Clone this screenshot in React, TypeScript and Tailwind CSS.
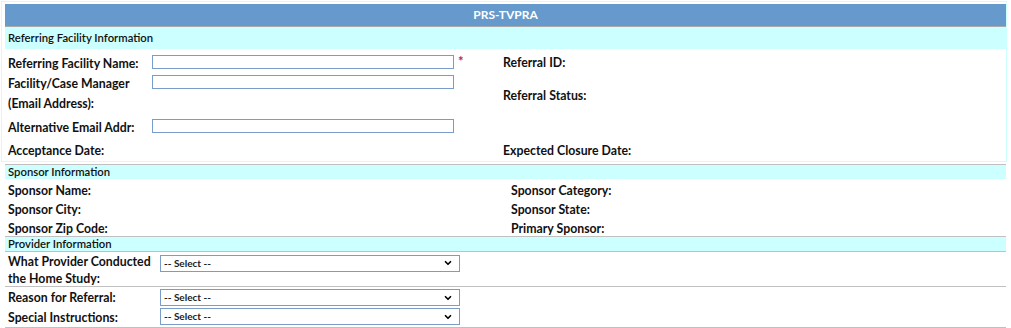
import { ChevronDown } from 'lucide-react';

const font = "font-['Lato','Liberation_Sans',sans-serif]";

function TextInput() {
  return <input type="text" className="block w-[302px] h-[14px] border border-[#7a9cc8] bg-white outline-none" />;
}

function Select() {
  return (
    <div className="relative w-[300px] h-[17px]">
      <select className="appearance-none w-full h-full border border-[#7a9cc8] bg-white pl-[3px] text-[10px] leading-[15px] text-[#222] outline-none">
        <option>-- Select --</option>
      </select>
      <ChevronDown className="absolute right-[7px] top-[4px] w-[10px] h-[10px] text-black pointer-events-none" strokeWidth={4} />
    </div>
  );
}

const label = 'font-bold text-[12.3px] leading-[15px] text-[#111]';
const heading = 'bg-[#ccffff] flex items-center pl-[3px] text-[11.3px] font-semibold text-[#111]';

export default function App() {
  return (
    <div className={`${font} w-[1011px] h-[328px] bg-white overflow-hidden`}>
      {/* Referring facility box */}
      <div className="ml-px mt-px w-[1006px] border border-[#ccffff] pt-[2px] pl-[3px]">
        <div className="h-[23px] bg-[#6699cc] border-b border-[#aaaaaa] flex items-center justify-center text-white font-bold text-[12px]">
          PRS-TVPRA
        </div>
        <div className={`h-[22px] ${heading}`}>Referring Facility Information</div>
        <div className={`grid grid-cols-[147px_351px_1fr] grid-rows-[25px_16px_23px_26px_22px] ${label}`}>
          <div className="flex items-center pl-[3px] pt-[3px]">Referring Facility Name:</div>
          <div className="flex items-center gap-[4px] pt-px">
            <TextInput />
            <span className="text-[#a0305a] text-[13px] font-bold -mt-[2px]">*</span>
          </div>
          <div className="flex items-center pt-px">Referral ID:</div>

          <div className="flex items-center pl-[3px] pt-[2px]">Facility/Case Manager</div>
          <div className="flex items-center"><TextInput /></div>
          <div className="row-span-2 flex items-center pt-[3px]">Referral Status:</div>

          <div className="flex items-center pl-[3px] pt-[3px]">(Email Address):</div>
          <div />

          <div className="flex items-center pl-[3px] pt-[3px]">Alternative Email Addr:</div>
          <div className="flex items-center"><TextInput /></div>
          <div />

          <div className="flex items-center pl-[3px]">Acceptance Date:</div>
          <div />
          <div className="flex items-center pt-px">Expected Closure Date:</div>
        </div>
      </div>

      <div className="ml-[5px] w-[1001px] mt-[2px]">
        {/* Sponsor */}
        <div className={`h-[15px] border-t border-[#c0c0c0] ${heading}`}>Sponsor Information</div>
        <div className={`grid grid-cols-[506px_1fr] auto-rows-[19px] ${label}`}>
          <div className="flex items-center pl-[3px] pt-[3px]">Sponsor Name:</div>
          <div className="flex items-center pt-[3px]">Sponsor Category:</div>
          <div className="flex items-center pl-[3px] pt-[3px]">Sponsor City:</div>
          <div className="flex items-center pt-[3px]">Sponsor State:</div>
          <div className="flex items-center pl-[3px] pt-[3px]">Sponsor Zip Code:</div>
          <div className="flex items-center pt-[3px]">Primary Sponsor:</div>
        </div>

        {/* Provider */}
        <div className={`h-[16px] border-y border-[#c0c0c0] ${heading}`}>Provider Information</div>
        <div className={`grid grid-cols-[155px_1fr] grid-rows-[34px] ${label} leading-[17px] border-b border-[#c0c0c0]`}>
          <div className="pl-[3px] pt-px">
            What Provider Conducted
            <br />
            the Home Study:
          </div>
          <div className="pt-[2px]"><Select /></div>
        </div>
        <div className={`grid grid-cols-[155px_1fr] grid-rows-[19px_21px] ${label} border-b border-[#c0c0c0]`}>
          <div className="flex items-center pl-[3px] pt-[2px]">Reason for Referral:</div>
          <div className="pt-[2px]"><Select /></div>
          <div className="flex items-center pl-[3px] pt-[2px]">Special Instructions:</div>
          <div className="pt-[2px]"><Select /></div>
        </div>
      </div>
    </div>
  );
}
